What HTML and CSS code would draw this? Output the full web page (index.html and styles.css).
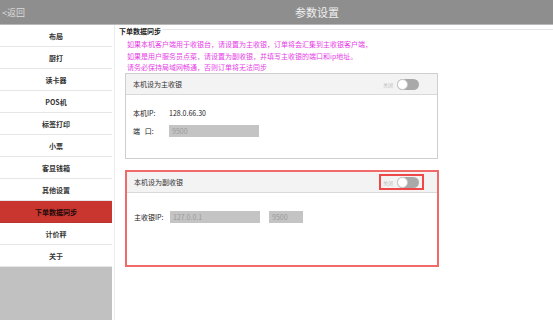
FILE: index.html
```html
<!DOCTYPE html>
<html lang="zh">
<head>
<meta charset="utf-8">
<link rel="stylesheet" href="styles.css">
</head>
<body>
<header class="topbar">
  <span class="back">&lt;返回</span>
  <span class="title">参数设置</span>
</header>
<div class="main">
  <nav class="sidebar">
    <div class="item">布局</div>
    <div class="item">厨打</div>
    <div class="item">读卡器</div>
    <div class="item">POS机</div>
    <div class="item">标签打印</div>
    <div class="item">小票</div>
    <div class="item">客显钱箱</div>
    <div class="item">其他设置</div>
    <div class="item active">下单数据同步</div>
    <div class="item">计价秤</div>
    <div class="item">关于</div>
    <div class="filler"></div>
  </nav>
  <section class="content">
    <div class="legend"><span class="legend-text">下单数据同步</span><span class="legend-line"></span></div>
    <div class="notice">
      <p>如果本机客户端用于收银台，请设置为主收银，订单将会汇集到主收银客户端，</p>
      <p>如果是用户服务员点菜，请设置为副收银，并填写主收银的端口和ip地址。</p>
      <p>请务必保持局域网畅通，否则订单将无法同步</p>
    </div>
    <div class="box">
      <div class="box-head">
        <span>本机设为主收银</span>
        <div class="toggle"><span class="toggle-label">关闭</span><span class="switch"><span class="knob"></span></span></div>
      </div>
      <div class="box-body">
        <div class="row"><span class="label">本机IP:</span><span class="value">128.0.66.30</span></div>
        <div class="row"><span class="label">端&nbsp;&nbsp;&nbsp;口:</span><span class="input wide">9500</span></div>
      </div>
    </div>
    <div class="box box-red">
      <div class="box-head">
        <span>本机设为副收银</span>
        <div class="toggle toggle-marked"><span class="toggle-label">关闭</span><span class="switch"><span class="knob"></span></span></div>
      </div>
      <div class="box-body body-2">
        <div class="row"><span class="label">主收银IP:</span><span class="input wide">127.0.0.1</span><span class="input narrow">9500</span></div>
      </div>
    </div>
  </section>
</div>
</body>
</html>
```
FILE: styles.css
```css
* { box-sizing: border-box; margin: 0; padding: 0; }
html, body { width: 553px; height: 320px; overflow: hidden; }
body {
  background: #fff;
  font-family: "Noto Sans CJK SC", "Noto Sans", sans-serif;
  font-size: 7px;
  color: #222;
}
.topbar {
  height: 25px;
  background: #8e8e8e;
  border-bottom: 1px solid #b9b9b9;
  display: flex;
  align-items: center;
  color: #f0f0f0;
}
.back { font-size: 9px; padding-left: 2px; color: #dcdcdc; }
.title {
  font-size: 11px;
  margin-left: 270px;
}
.main { display: flex; height: 295px; }
.sidebar {
  width: 112px;
  display: flex;
  flex-direction: column;
}
.item {
  height: 22px;
  border-bottom: 1px solid #e6e6e6;
  display: flex;
  align-items: center;
  justify-content: center;
  font-size: 7px;
  font-weight: bold;
  color: #333;
}
.item.active { background: #c8362f; color: #1a0a0a; border-bottom-color: #b33; }
.filler { flex: 1; background: #c1c1c1; }
.content {
  flex: 1;
  margin-left: 2px;
  border-left: 1px solid #e9edf0;
  padding-left: 4px;
}
.legend { display: flex; align-items: flex-start; height: 13px; padding-top: 1px; }
.legend-text { font-weight: bold; font-size: 7px; line-height: 10px; color: #222; }
.legend-line { flex: 1; border-top: 1px solid #e2e6ea; margin-top: 3px; margin-left: 2px; }
.notice { padding-left: 8px; color: #e63ee6; line-height: 11.5px; height: 35px; padding-top: 1px; }
.box {
  margin-left: 6px;
  width: 313px;
  border: 1px solid #cfcfcf;
  height: 86px;
}
.box-head {
  height: 21px;
  background: #f3f3f3;
  border-bottom: 1px solid #d9d9d9;
  display: flex;
  align-items: center;
  justify-content: space-between;
  padding: 0 18px 0 7px;
  color: #333;
}
.toggle { display: flex; align-items: center; gap: 4px; }
.toggle-label { font-size: 5px; color: #bbb; }
.switch {
  width: 22px; height: 11px; border-radius: 6px;
  background: #a9a9a9; position: relative; display: block;
}
.knob {
  position: absolute; left: 0; top: 0;
  width: 11px; height: 11px; border-radius: 50%;
  background: #fff; border: 1px solid #c8c8c8;
}
.box-body { padding: 9px 0 0 7px; }
.row { display: flex; align-items: center; height: 18px; }
.label { width: 36px; }
.value { font-size: 7px; }
.input {
  background: #c4c4c4; color: #9a9a9a;
  height: 12px; line-height: 12px; padding-left: 3px; font-size: 7px;
}
.input.wide { width: 90px; }
.input.narrow { width: 34px; margin-left: 9px; }
.box-red {
  margin-top: 11px;
  border: 2px solid #f06a6a;
  height: 97px;
  width: 314px;
}
.box-red .box-head { padding-right: 13px; }
.toggle-marked { border: 2px solid #f04848; padding: 1px 3px 1px 2px; height: 16px; }
.body-2 { padding-top: 15px; }
```
